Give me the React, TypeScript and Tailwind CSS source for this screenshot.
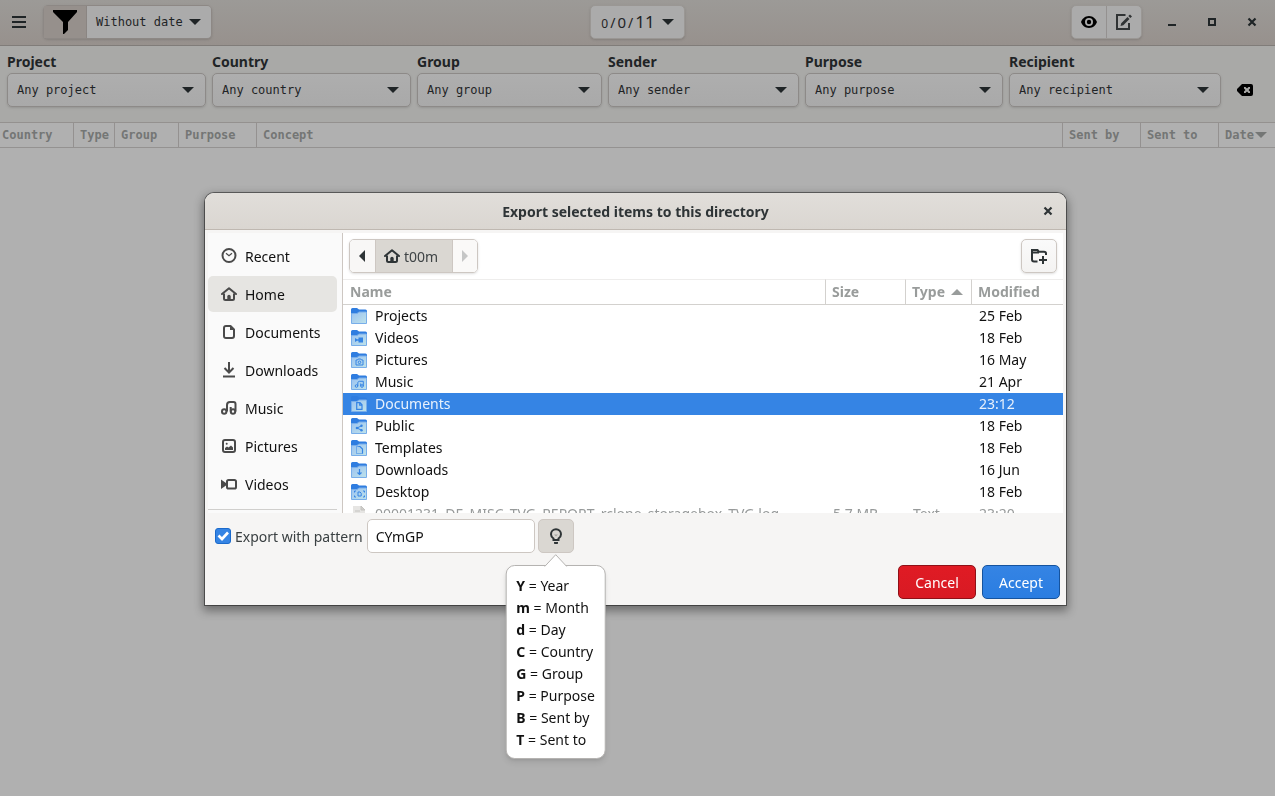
import React from "react";

type Glyph = React.ReactNode;

function Svg({ children, className = "size-4 shrink-0" }: { children: Glyph; className?: string }) {
  return (
    <svg viewBox="0 0 16 16" className={className} fill="none" aria-hidden="true">
      {children}
    </svg>
  );
}

function Caret({ className = "h-[6px] w-3 shrink-0" }: { className?: string }) {
  return (
    <svg viewBox="0 0 12 6" className={className} fill="currentColor" aria-hidden="true">
      <path d="M0 0h12L6 6z" />
    </svg>
  );
}

const filters = [
  { label: "Project", value: "Any project" },
  { label: "Country", value: "Any country" },
  { label: "Group", value: "Any group" },
  { label: "Sender", value: "Any sender" },
  { label: "Purpose", value: "Any purpose" },
  { label: "Recipient", value: "Any recipient" },
];

const homeGlyph = (
  <>
    <path d="M1 8 8 2.200 15 8" stroke="currentColor" strokeWidth="2" strokeLinecap="round" strokeLinejoin="round" />
    <path d="M3 7.500v5c0 1 .5 1.500 1.500 1.500h7c1 0 1.500-.5 1.500-1.500v-5" stroke="currentColor" strokeWidth="2" />
    <path d="M6.300 14v-3.500a1.700 1.700 0 0 1 3.400 0V14z" fill="currentColor" />
  </>
);

const places: { name: string; glyph: Glyph }[] = [
  {
    name: "Recent",
    glyph: (
      <>
        <circle cx="8" cy="7.500" r="6.500" stroke="currentColor" strokeWidth="2" />
        <path d="M5 5.200 8 7.700l3-2.500" stroke="currentColor" strokeWidth="1.200" />
      </>
    ),
  },
  { name: "Home", glyph: homeGlyph },
  {
    name: "Documents",
    glyph: (
      <>
        <path d="M5 2h4.500L13 5.500V12c0 1.300-.7 2-2 2H5c-1.300 0-2-.7-2-2V4c0-1.300.7-2 2-2z" stroke="currentColor" strokeWidth="2" strokeLinejoin="round" />
        <path d="M9 2v4h4z" fill="currentColor" />
      </>
    ),
  },
  {
    name: "Downloads",
    glyph: (
      <>
        <path d="M8 0v10M3.500 6 8 10.500 12.500 6" stroke="currentColor" strokeWidth="2" />
        <path d="M2 14.500h12" stroke="currentColor" strokeWidth="2" />
      </>
    ),
  },
  {
    name: "Music",
    glyph: (
      <>
        <circle cx="3.200" cy="11.500" r="2.200" stroke="currentColor" strokeWidth="2" />
        <circle cx="12" cy="11.500" r="2.200" stroke="currentColor" strokeWidth="2" />
        <path d="M6 11.500V5c0-2 1-3 3-3h3.500c1.300 0 2 .7 2 2v7.500M9.700 11.500V7" stroke="currentColor" strokeWidth="2" />
      </>
    ),
  },
  {
    name: "Pictures",
    glyph: (
      <>
        <rect x="2" y="2" width="12" height="12" rx="2" stroke="currentColor" strokeWidth="2" />
        <path d="M4 12V10l2-1.500 1.500 1L10 7.500l2 2V12z" fill="currentColor" />
        <circle cx="5.700" cy="5.700" r="1" fill="currentColor" />
      </>
    ),
  },
  {
    name: "Videos",
    glyph: (
      <>
        <rect x="6" y="4" width="9" height="8.500" rx="1.600" stroke="currentColor" strokeWidth="2" />
        <path d="M0 3.500 5 7v2.500L0 13z" fill="currentColor" />
      </>
    ),
  },
];

const folders: { name: string; date: string; emblem?: Glyph }[] = [
  { name: "Projects", date: "25 Feb" },
  {
    name: "Videos",
    date: "18 Feb",
    emblem: <path d="M7.500 7.500h4.500v5H7.500v-1.700H6l-2 1.200V8l2 1.200h1.500z" fill="#3584e4" />,
  },
  {
    name: "Pictures",
    date: "16 May",
    emblem: (
      <>
        <path d="M5 8h1.500l.7-1h2.600l.7 1H12v5H5z" stroke="#3584e4" />
        <circle cx="8.500" cy="10.300" r="1.300" stroke="#3584e4" />
      </>
    ),
  },
  {
    name: "Music",
    date: "21 Apr",
    emblem: (
      <>
        <circle cx="5.500" cy="12" r="1.300" stroke="#3584e4" />
        <circle cx="11" cy="12" r="1.300" stroke="#3584e4" />
        <path d="M6.800 12V9c0-1 .7-1.700 1.700-1.700h3.800V12M9.700 12V9.500" stroke="#3584e4" />
      </>
    ),
  },
  {
    name: "Documents",
    date: "23:12",
    emblem: <path d="M5.700 6.700H9l2 2v4.600H5.700zM8.700 7v2.200h2" stroke="#3584e4" strokeWidth="1.200" />,
  },
  {
    name: "Public",
    date: "18 Feb",
    emblem: (
      <>
        <path d="m10.500 7.800-4.500 2.200 4.500 2.200" stroke="#3584e4" />
        <circle cx="10.500" cy="7.800" r="1.200" fill="#3584e4" />
        <circle cx="6" cy="10" r="1.300" fill="#3584e4" />
        <circle cx="10.500" cy="12.200" r="1.200" fill="#3584e4" />
      </>
    ),
  },
  {
    name: "Templates",
    date: "18 Feb",
    emblem: (
      <>
        <path d="M5.500 13.500v-7H8M11.500 13.500h-6" stroke="#3584e4" strokeDasharray="1 1" />
        <path d="M7.500 6.500H9l2.500 2.500v4.500" stroke="#3584e4" strokeWidth="1.200" />
      </>
    ),
  },
  {
    name: "Downloads",
    date: "16 Jun",
    emblem: <path d="M8.500 7v5.500M6.500 10.500l2 2 2-2" stroke="#3584e4" strokeWidth="1.200" />,
  },
  {
    name: "Desktop",
    date: "18 Feb",
    emblem: (
      <>
        <path d="M3.500 8.500v-1.500H5M12 7h1.500v1.500M13.500 11.500V13H12M5 13H3.500v-1.500" stroke="#3584e4" />
        <path d="M7 8h2l1.200 1.200V12H7z" stroke="#3584e4" />
      </>
    ),
  },
];

function FolderIcon({ emblem }: { emblem?: Glyph }) {
  return (
    <Svg>
      <defs>
        <linearGradient id="folder-face" x1="0" y1="0" x2="1" y2="1">
          <stop offset="0" stopColor="#99c1f1" />
          <stop offset="1" stopColor="#bfe3ea" />
        </linearGradient>
      </defs>
      <path d="M0 1.500Q0 0 1.500 0H6l2 1.500h6.500Q16 1.500 16 3v4H0z" fill="#2f7de0" />
      <path d="M.5 5.500H6L8 4h7.500v11.500H.5z" fill="url(#folder-face)" stroke="#78aeea" />
      {emblem}
    </Svg>
  );
}

const legend = [
  ["Y", "Year"],
  ["m", "Month"],
  ["d", "Day"],
  ["C", "Country"],
  ["G", "Group"],
  ["P", "Purpose"],
  ["B", "Sent by"],
  ["T", "Sent to"],
];

function MainWindow() {
  return (
    <div className="text-[#1f2426]">
      <header className="grid h-[46px] grid-cols-[1fr_auto_1fr] items-center border-b border-[#807c79] bg-linear-to-b from-[#9c9a97] to-[#97918d] pb-[2px]">
        <div className="flex items-center">
          <button aria-label="Menu" className="flex h-[34px] w-[37px] items-center justify-center">
            <Svg>
              <path d="M1 3h14M1 8h14M1 13h14" stroke="currentColor" strokeWidth="2" />
            </Svg>
          </button>
          <div className="ml-[6px] flex h-[34px] rounded-[5px] border border-[#8d8885] font-['DejaVu_Sans_Mono',monospace] text-[12px] shadow-sm">
            <button aria-label="Filter" className="flex w-[43px] items-center justify-center border-r border-[#8a8582] bg-[#96908c]">
              <svg viewBox="0 0 24 24" className="size-6 fill-black" aria-hidden="true">
                <path d="M0 0h24v2l-9 10v8l-4 4h-1V12L0 2z" />
              </svg>
            </button>
            <button className="flex items-center gap-[6px] rounded-r-[4px] bg-[#ababab] pr-[10px] pl-[9px]">
              Without date
              <Caret />
            </button>
          </div>
        </div>
        <button className="flex h-[34px] items-center gap-[7px] rounded-[5px] border border-[#9a9794] bg-[#ababab] px-[10px] shadow-sm">
          <span className="flex items-baseline gap-[2px] text-[14px]">
            <span className="text-[12px]">0</span>/<span className="text-[15px]">0</span>/<span className="text-[17px]">11</span>
          </span>
          <Caret />
        </button>
        <div className="flex items-center justify-end pr-[3px]">
          <div className="mr-[10px] flex h-[34px] rounded-[5px] border border-[#9a9794] bg-[#ababab] shadow-sm">
            <button aria-label="Preview" className="flex w-[35px] items-center justify-center border-r border-[#949190] text-black">
              <Svg>
                <path d="M8 2C4 2 1 5 0 8c1 3 4 6 8 6s7-3 8-6c-1-3-4-6-8-6zm0 2a4 4 0 1 1 0 8 4 4 0 0 1 0-8z" fill="currentColor" fillRule="evenodd" />
                <circle cx="8" cy="8" r="2.200" fill="currentColor" />
              </Svg>
            </button>
            <button aria-label="Edit" className="flex w-[34px] items-center justify-center text-[#303334]">
              <Svg>
                <path d="M9.500 1H1v14h12V9" stroke="currentColor" strokeWidth="2" />
                <path d="M4.500 12 5.200 9.200 11.500 2.900l2 2L7.300 11.200zM12.300 2.100 14 .4l2 2-1.700 1.700z" fill="currentColor" />
              </Svg>
            </button>
          </div>
          <button aria-label="Minimize" className="flex size-10 items-center justify-center">
            <Svg>
              <path d="M4 11h8" stroke="currentColor" strokeWidth="2" />
            </Svg>
          </button>
          <button aria-label="Maximize" className="flex size-10 items-center justify-center">
            <Svg>
              <path d="M5 5h6v6H5z" stroke="currentColor" strokeWidth="2" />
            </Svg>
          </button>
          <button aria-label="Close" className="flex size-10 items-center justify-center">
            <Svg>
              <path d="m4.500 4.500 7 7m0-7-7 7" stroke="currentColor" strokeWidth="2.200" />
            </Svg>
          </button>
        </div>
      </header>

      <form className="grid grid-cols-[199fr_199fr_185fr_191fr_198fr_212fr_36px] items-end gap-[6px] border-b border-[#94918f] bg-[#a9a9a7] pt-[6px] pr-3 pb-[15px] pl-[7px]">
        {filters.map((f) => (
          <label key={f.label} className="flex flex-col gap-px text-[14px] leading-5 font-bold">
            {f.label}
            <span className="relative flex">
              <select className="h-[34px] w-full appearance-none rounded-[5px] border border-[#8d8a88] bg-linear-to-b from-[#aeaeae] to-[#a9a9a9] pl-[9px] font-['DejaVu_Sans_Mono',monospace] text-[12px] font-normal shadow-sm">
                <option>{f.value}</option>
              </select>
              <Caret className="pointer-events-none absolute top-[14px] right-3 h-[6px] w-3" />
            </span>
          </label>
        ))}
        <button type="button" aria-label="Clear filters" className="flex h-[34px] items-center justify-center text-black">
          <Svg>
            <path d="M5 2h9q2 0 2 2v8q0 2-2 2H5L0 9V7zm2 3v1.500L8.500 8 7 9.500V11h1.500L10 9.500l1.500 1.500H13V9.500L11.500 8 13 6.500V5h-1.500L10 6.500 8.500 5z" fill="currentColor" fillRule="evenodd" />
          </Svg>
        </button>
      </form>

      <table className="w-full table-fixed border-separate border-spacing-0 border-b border-[#949291] text-left font-['DejaVu_Sans_Mono',monospace] text-[12px] leading-4 text-[#747675]">
        <thead>
          <tr className="h-6 [&>th]:border-r [&>th]:border-[#949190] [&>th]:p-0 [&>th]:pl-[6px] [&>th:first-child]:pl-[2px] [&>th:last-child]:border-r-0">
            <th className="w-[74px]">Country</th>
            <th className="w-[41px]">Type</th>
            <th className="w-[64px]">Group</th>
            <th className="w-[78px]">Purpose</th>
            <th>Concept</th>
            <th className="w-[78px]">Sent by</th>
            <th className="w-[78px]">Sent to</th>
            <th className="w-[56px]">
              <span className="flex items-center gap-px">
                Date
                <Caret />
              </span>
            </th>
          </tr>
        </thead>
      </table>
    </div>
  );
}

function Sidebar() {
  return (
    <nav className="w-[134px] shrink-0 bg-[#fafafa] pt-[5px] pr-[5px]">
      <ul className="flex flex-col gap-[2px] border-b border-[#d0cfcd] pb-[7px] text-[14px] text-[#111]">
        {places.map((p) => (
          <li key={p.name}>
            <button className={`flex h-9 w-full items-center gap-2 rounded-[5px] pl-[13px] ${p.name === "Home" ? "bg-[#e6e5e2]" : ""}`}>
              <span className="text-[#4a4a4a]">
                <Svg>{p.glyph}</Svg>
              </span>
              {p.name}
            </button>
          </li>
        ))}
      </ul>
    </nav>
  );
}

function FileList() {
  return (
    <div className="min-w-0 flex-1 border-l border-[#cdc7c2] bg-white">
      <div className="flex items-center justify-between p-[6px]">
        <div className="flex h-[34px] rounded-[5px] border border-[#cdc7c2] shadow-sm">
          <button aria-label="Back" className="flex w-[26px] items-center justify-center rounded-l-[4px] border-r border-[#cdc7c2] bg-[#f8f7f6] text-[#2e3436]">
            <Svg>
              <path d="M10 2v12L4 8z" fill="currentColor" />
            </Svg>
          </button>
          <button className="flex w-[77px] items-center gap-1 border-r border-[#cdc7c2] bg-[#dad7d2] pl-2 text-[14px] text-[#3f4446]">
            <span className="text-[#2e3436]">
              <Svg>{homeGlyph}</Svg>
            </span>
            t00m
          </button>
          <button aria-label="Forward" className="flex w-6 items-center justify-center rounded-r-[4px] bg-[#faf9f8] text-[#c5c6c6]">
            <Svg>
              <path d="M5 2v12l6-6z" fill="currentColor" />
            </Svg>
          </button>
        </div>
        <button aria-label="Create folder" className="flex h-[34px] w-9 items-center justify-center rounded-[5px] border border-[#cdc7c2] bg-linear-to-b from-[#fafafa] to-[#f4f3f2] text-[#2e3436] shadow-sm">
          <Svg>
            <path d="M6.500 13.500H3Q1 13.500 1 11.500V2h5.500l1.200 1.700H13q2 0 2 1.800V7M1 4.500h7" stroke="currentColor" strokeWidth="2" />
            <path d="M12 8v8M8 12h8" stroke="currentColor" strokeWidth="2" />
          </Svg>
        </button>
      </div>
      <div className="h-[234px] overflow-hidden">
        <table className="w-full table-fixed border-separate border-spacing-0 text-left text-[14px] leading-[22px] whitespace-nowrap text-[#111]">
          <thead className="text-[#999c9b]">
            <tr className="h-[26px] [&>th]:border-t [&>th]:border-r [&>th]:border-b [&>th]:border-[#d3d1ce] [&>th]:border-t-[#eeedec] [&>th]:p-0 [&>th]:pl-[6px] [&>th:first-child]:pl-[7px] [&>th:last-child]:border-r-0">
              <th>Name</th>
              <th className="w-[80px]">Size</th>
              <th className="w-[66px]">
                <span className="flex items-center gap-[6px]">
                  Type
                  <Caret className="h-[6px] w-3 rotate-180" />
                </span>
              </th>
              <th className="w-[91px]">Modified</th>
            </tr>
          </thead>
          <tbody>
            {folders.map((f) => (
              <tr key={f.name} className={`h-[22px] ${f.name === "Documents" ? "bg-[#3584e4] text-[#e8f1fc]" : ""}`}>
                <td className="p-0 pl-2">
                  <span className="flex h-[22px] items-center gap-2">
                    <FolderIcon emblem={f.emblem} />
                    {f.name}
                  </span>
                </td>
                <td />
                <td />
                <td className="p-0 pl-[7px]">{f.date}</td>
              </tr>
            ))}
            <tr className="h-[22px] text-[#979a9a]">
              <td className="p-0 pl-2">
                <span className="flex h-[22px] items-center gap-2">
                  <Svg>
                    <path d="M2 0h8l4 4v12H2z" fill="#e6e5e3" />
                    <path d="M10 0v4h4zM4 5h5M4 7.500h8M4 10h8" fill="#cfcecb" stroke="#c4c3c0" />
                  </Svg>
                  00001231_DE_MISC_TVG_REPORT_rclone_storagebox_TVG.log
                </span>
              </td>
              <td className="p-0 pl-[7px]">5.7 MB</td>
              <td className="p-0 pl-[7px]">Text</td>
              <td className="p-0 pl-[7px]">23:20</td>
            </tr>
          </tbody>
        </table>
      </div>
    </div>
  );
}

function PatternHelp() {
  return (
    <div className="relative">
      <button
        type="button"
        aria-label="Pattern help"
        className="flex h-[34px] w-9 items-center justify-center rounded-[5px] border border-[#cdc7c2] bg-[#dad7d2] text-[#2e3436]"
      >
        <Svg>
          <path d="M5.500 10.500C4 9.500 3 8.200 3 6.200a5 5 0 0 1 10 0c0 2-1 3.300-2.500 4.300V12h-5z" stroke="currentColor" strokeWidth="2" />
          <path d="M6 14h4v1.200q0 .8-.8.8H6.800Q6 16 6 15.200z" fill="currentColor" />
          <path d="M6 6.500h4L8 8.500z" fill="#a5a5a2" />
        </Svg>
      </button>
      <div
        role="tooltip"
        className="absolute top-[46px] left-1/2 w-max -translate-x-1/2 rounded-[9px] border border-[#b5b3b1] bg-white px-[10px] pt-[9px] pb-[7px] text-[14px] leading-[22px] text-[#111] shadow-md"
      >
        <svg viewBox="0 0 24 13" className="absolute -top-3 left-1/2 h-[13px] w-6 -translate-x-1/2" aria-hidden="true">
          <path d="M1 12.500 12 .7l11 11.800" fill="#fff" stroke="#b5b3b1" />
        </svg>
        {legend.map(([key, meaning]) => (
          <div key={key}>
            <b>{key}</b> = {meaning}
          </div>
        ))}
      </div>
    </div>
  );
}

function ExportDialog() {
  return (
    <section
      role="dialog"
      aria-label="Export selected items to this directory"
      className="w-[68%] max-w-[861px] min-w-[640px] rounded-t-[9px] bg-[#f6f5f4] shadow-[0_0_0_1px_#00000070,0_4px_10px_2px_#00000060]"
    >
      <header className="grid h-[37px] grid-cols-[36px_1fr_36px] items-center rounded-t-[9px] border-b border-[#bfb8b1] bg-linear-to-b from-[#e1deda] to-[#dad6d1] text-[#2e3436]">
        <h1 className="col-start-2 text-center text-[14px] font-bold">Export selected items to this directory</h1>
        <button aria-label="Close dialog" className="flex h-full items-center justify-center">
          <Svg>
            <path d="m4.500 4.500 7 7m0-7-7 7" stroke="currentColor" strokeWidth="2.200" />
          </Svg>
        </button>
      </header>
      <div className="flex px-[3px] pt-[3px]">
        <Sidebar />
        <FileList />
      </div>
      <form className="p-[6px]">
        <div className="flex items-center pl-1 text-[14px] text-[#3a4042]">
          <label className="flex items-center gap-1">
            <span className="relative flex size-4">
              <input type="checkbox" defaultChecked className="size-4 appearance-none rounded-[3px] border border-[#1b6acb] bg-[#3584e4]" />
              <Svg className="pointer-events-none absolute inset-0 size-4">
                <path d="m3.500 7.500 3.500 3.500L13 4.500" stroke="#fff" strokeWidth="2.600" />
              </Svg>
            </span>
            Export with pattern
          </label>
          <input
            type="text"
            aria-label="Pattern"
            defaultValue="CYmGP"
            className="mr-[3px] ml-1 h-[34px] w-[168px] rounded-[5px] border border-[#cdc7c2] bg-white px-2 text-[14px] text-[#111]"
          />
          <PatternHelp />
        </div>
        <div className="mt-3 flex justify-end gap-[6px] text-[14px] text-white">
          <button type="button" className="h-[34px] w-[78px] rounded-[5px] border border-[#8f1017] bg-linear-to-b from-[#e01b24] to-[#d81a23]">
            Cancel
          </button>
          <button type="button" className="h-[34px] w-[78px] rounded-[5px] border border-[#15539e] bg-linear-to-b from-[#3584e4] to-[#2a7de1]">
            Accept
          </button>
        </div>
      </form>
    </section>
  );
}

export default function App() {
  return (
    <div className="min-h-screen rounded-tr-lg bg-[#b0b0b0] font-['Noto_Sans',sans-serif]">
      <MainWindow />
      <div className="fixed inset-0 flex items-center justify-center pt-[2px] pr-1">
        <ExportDialog />
      </div>
    </div>
  );
}
